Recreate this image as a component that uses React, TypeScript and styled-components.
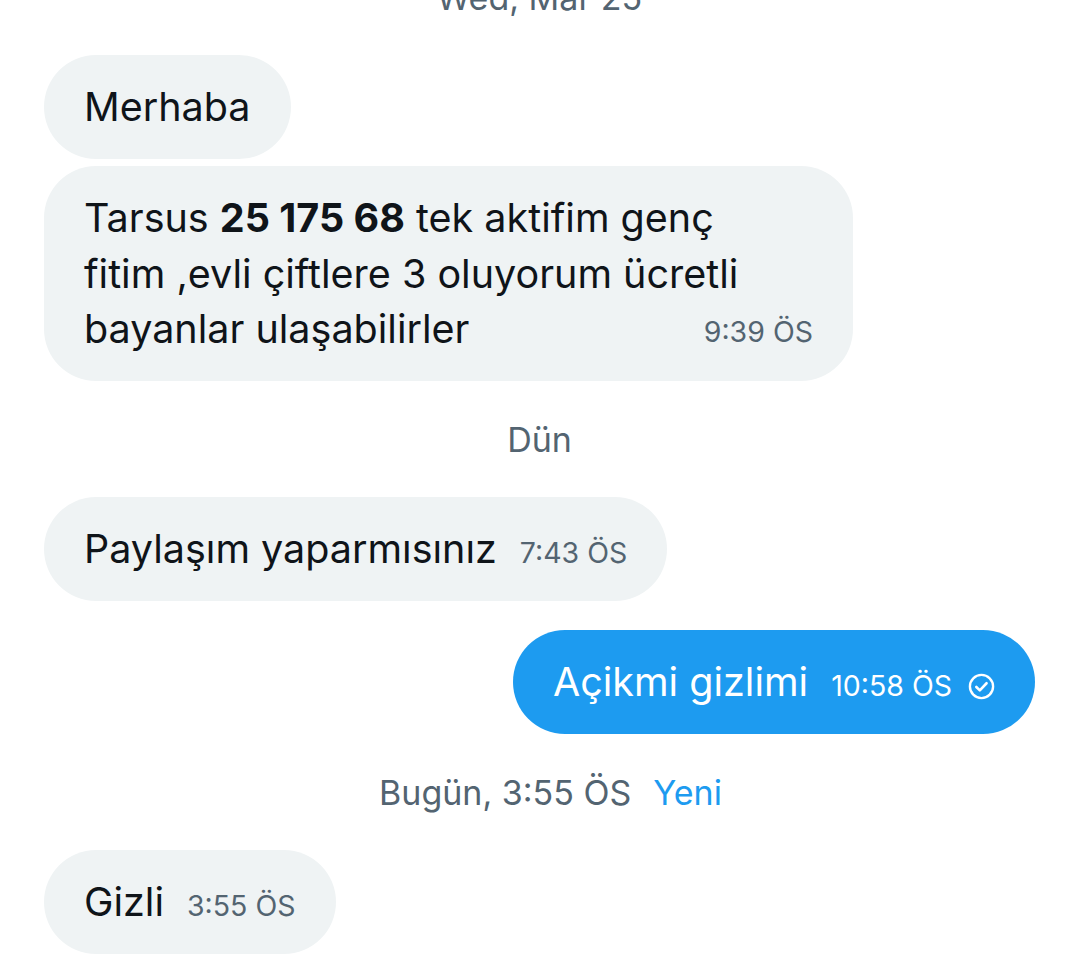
import React from "react";
import styled, { createGlobalStyle } from "styled-components";

const GlobalStyle = createGlobalStyle`
  html, body {
    margin: 0;
    padding: 0;
    background: #ffffff;
    overflow: hidden;
  }
  body {
    font-family: Inter, "Noto Sans", Roboto, sans-serif;
    color: #0f1419;
  }
`;

const Thread = styled.div`
  display: flex;
  flex-direction: column;
  padding: 0 45px 0 44px;
  margin-top: -54px;
`;

const DateRow = styled.div<{ $shift?: number }>`
  height: 102px;
  margin-bottom: 7px;
  display: flex;
  align-items: center;
  justify-content: center;
  gap: 22px;
  padding-left: ${(p) => p.$shift ?? 0}px;
  font-size: 34px;
  color: #536471;
`;

const NewLabel = styled.span`
  color: #1d9bf0;
`;

const Row = styled.div<{ $mine?: boolean }>`
  display: flex;
  justify-content: ${(p) => (p.$mine ? "flex-end" : "flex-start")};
  margin-top: ${(p) => (p.$mine ? "22px" : "0")};
  margin-bottom: 7px;
`;

const Bubble = styled.div<{ $mine?: boolean; $wide?: boolean }>`
  background: ${(p) => (p.$mine ? "#1d9bf0" : "#eff3f4")};
  color: ${(p) => (p.$mine ? "#ffffff" : "#0f1419")};
  border-radius: 52px;
  padding: ${(p) => (p.$wide ? "25px 40px 21px" : "24px 40px")};
  font-size: 39.5px;
  line-height: ${(p) => (p.$wide ? "55.7px" : "56px")};
  width: ${(p) => (p.$wide ? "809px" : "auto")};
  max-width: 809px;
  box-sizing: border-box;
`;

const Bold = styled.b`
  font-weight: 700;
`;

const Time = styled.span<{ $mine?: boolean }>`
  display: inline-flex;
  align-items: center;
  gap: 16px;
  margin-left: 23px;
  font-size: 28.5px;
  line-height: 1;
  color: ${(p) => (p.$mine ? "#ffffff" : "#536471")};
  vertical-align: baseline;
`;

const TimeEnd = styled(Time)`
  float: right;
  line-height: 55.7px;
  margin-top: 2px;
`;

const CheckIcon = styled.svg`
  width: 27px;
  height: 27px;
  flex: none;
`;

function CheckCircle() {
  return (
    <CheckIcon viewBox="0 0 24 24" fill="none">
      <circle cx="12" cy="12" r="10.3" stroke="#ffffff" strokeWidth="2.1" />
      <path d="M7.4 12.4l3.1 3 6-6.3" stroke="#ffffff" strokeWidth="2.3" strokeLinecap="round" strokeLinejoin="round" />
    </CheckIcon>
  );
}

export default function App() {
  return (
    <>
      <GlobalStyle />
      <Thread>
        <DateRow>Wed, Mar 25</DateRow>
        <Row>
          <Bubble>Merhaba</Bubble>
        </Row>
        <Row>
          <Bubble $wide>
            Tarsus <Bold>25 175 68</Bold> tek aktifim genç
            <br />
            fitim ,evli çiftlere 3 oluyorum ücretli
            <br />
            bayanlar ulaşabilirler
            <TimeEnd>9:39 ÖS</TimeEnd>
          </Bubble>
        </Row>
        <DateRow>Dün</DateRow>
        <Row>
          <Bubble>
            Paylaşım yaparmısınız<Time>7:43 ÖS</Time>
          </Bubble>
        </Row>
        <Row $mine>
          <Bubble $mine>
            Açikmi gizlimi
            <Time $mine>
              10:58 ÖS
              <CheckCircle />
            </Time>
          </Bubble>
        </Row>
        <DateRow $shift={22}>
          <span>Bugün, 3:55 ÖS</span>
          <NewLabel>Yeni</NewLabel>
        </DateRow>
        <Row>
          <Bubble>
            Gizli<Time>3:55 ÖS</Time>
          </Bubble>
        </Row>
      </Thread>
    </>
  );
}
